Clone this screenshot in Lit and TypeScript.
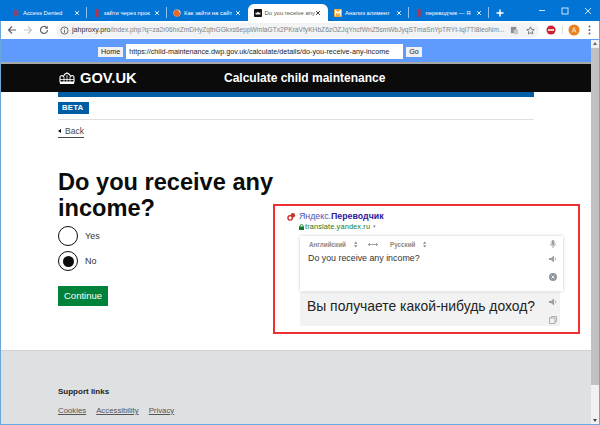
import { LitElement, html, css, svg } from "lit";
import { customElement } from "lit/decorators.js";

const X = svg`<svg class="x" viewBox="0 0 8 8"><path d="M1.500 1.500l5 5M6.500 1.500l-5 5" stroke="currentColor" stroke-width="1.200" fill="none"/></svg>`;
const favs: Record<string, unknown> = {
  red: svg`<svg class="fav" viewBox="0 0 8 10"><rect x="1" y="1" width="6" height="8" rx="1" fill="#7f4a78"/></svg>`,
  ya: svg`<svg class="fav" viewBox="0 0 8 10"><rect x="2" y="0" width="4" height="10" rx="1" fill="#b8324a"/></svg>`,
  fox: svg`<svg class="fav" viewBox="0 0 10 10"><circle cx="5" cy="5" r="4.500" fill="#f6f0e6"/><path d="M1 6a4 4 0 0 1 5-5l3 4a4 4 0 0 1-8 1z" fill="#e8682c"/></svg>`,
  gov: svg`<svg class="fav" viewBox="0 0 10 10"><rect width="10" height="10" rx="1" fill="#111"/><path d="M2 7V4l1.500 1L5 3l1.500 2L8 4v3z" fill="#eee"/></svg>`,
  m: svg`<svg class="fav" viewBox="0 0 10 10"><rect width="10" height="10" rx="1" fill="#f2a93b"/><path d="M2 8V2l3 3.500L8 2v6" stroke="#fff" stroke-width="1.300" fill="none"/></svg>`,
};

@customElement("app-root")
export class AppRoot extends LitElement {
  static styles = css`
    :host { display: block; width: 600px; height: 425px; overflow: hidden; font-family: "Liberation Sans", Arial, sans-serif; color: #0b0c0c; background: #fff; position: relative; }
    .window { height: 425px; box-sizing: border-box; display: flex; flex-direction: column; border: 1px solid #6ba6dc; border-top: 0; }
    .tabs { height: 21px; flex: none; background: #0274d6; display: flex; align-items: flex-end; margin: 0 -1px; padding-left: 6px; color: #fff; font-size: 5.900px; }
    .tab { width: 80.500px; height: 17px; box-sizing: border-box; display: flex; align-items: center; gap: 3px; padding: 0 4px 0 6px; position: relative; flex: none; }
    .tab.sep::after { content: ""; position: absolute; right: 0; top: 3px; height: 11px; width: 1px; background: #8fc2ee; }
    .tab.on { background: #fff; border-radius: 6px 6px 0 0; }
    .tab .t { flex: 1; white-space: nowrap; min-width: 0; }
    .tab.on .t { color: #555; }
    .tab svg.fav { width: 8px; height: 8px; flex: none; }
    .x { width: 6px; height: 6px; flex: none; margin-right: 3px; }
    .tab.on .x { color: #222; }
    .plus { margin-left: 7px; width: 8px; height: 8px; margin-bottom: 4px; flex: none; }
    .winc { margin-left: auto; display: flex; align-items: center; height: 21px; align-self: flex-start; padding-right: 8px; gap: 15px; }
    .winc svg { width: 8px; height: 8px; display: block; }
    .toolbar { height: 18px; flex: none; background: #fff; display: flex; align-items: center; padding-left: 6px; box-sizing: border-box; }
    .nav { width: 16px; height: 10px; flex: none; display: flex; justify-content: flex-start; }
    .nav svg { width: 10px; height: 10px; }
    .omni { margin-left: 1px; width: 483px; height: 15px; border-radius: 8px; background: #f1f3f4; display: flex; align-items: center; flex: none; padding: 0 4px 0 4px; box-sizing: border-box; gap: 3px; font-size: 6.650px; color: #808488; white-space: nowrap; overflow: hidden; }
    .omni b { font-weight: 400; color: #333; font-size: 7.100px; }
    .omni .u { flex: 1; min-width: 0; }
    .omni svg { width: 9px; height: 9px; flex: none; }
    .omni svg.star { margin-left: 4px; }
    .tools { display: flex; align-items: center; padding-left: 7px; }
    .tools svg { display: block; }
    .proxy { height: 21px; padding: 2px 0 0 97px; flex: none; background: #5f9bfd; border-bottom: 2px solid #a8a8a8; box-sizing: content-box; display: flex; align-items: center; font-size: 7.200px; color: #222; }
    .btn { background: #f0f0f0; height: 10px; padding: 0 3px; line-height: 10px; font-size: 7.200px; }
    .addr { background: #fff; width: 277px; height: 15px; line-height: 15px; margin: 0 3px; padding-left: 3px; box-sizing: border-box; white-space: nowrap; overflow: hidden; }
    .body { flex: 1; display: flex; min-height: 0; }
    .page { flex: 1; min-width: 0; display: flex; flex-direction: column; position: relative; }
    .scroll { width: 8px; flex: none; background: #f1f1f1; margin-top: -24px; display: flex; flex-direction: column; justify-content: space-between; }
    .arrow { height: 7px; flex: none; position: relative; }
    .arrow::after { content: ""; position: absolute; left: 2px; top: 2px; border: 2px solid transparent; border-bottom: 3px solid #666; border-top: 0; }
    .arrow.dn::after { border-bottom: 0; border-top: 3px solid #444; }
    .thumb { height: 337px; flex: none; background: #c1c1c1; margin-bottom: 32px; }
    .bar { background: #0b0b0b; height: 28px; flex: none; color: #fff; display: flex; align-items: center; padding-left: 57px; }
    .crown { width: 20px; height: 14px; flex: none; margin-left: -1px; }
    .gov { font-weight: 700; font-size: 14.700px; margin-left: 3px; width: 144px; }
    .title { font-weight: 700; font-size: 12px; }
    .main { flex: 1; padding: 0 57px; display: flex; flex-direction: column; align-items: flex-start; }
    .rule { align-self: stretch; height: 5px; background: #005ea5; flex: none; }
    .phase { align-self: stretch; border-bottom: 1px solid #dee0e2; padding: 5px 0; }
    .beta { display: block; width: 31px; height: 12px; background: #005ea5; color: #fff; font-size: 7.800px; font-weight: 700; line-height: 12px; padding-left: 4px; box-sizing: border-box; letter-spacing: .2px; }
    .back { margin-top: 6px; font-size: 8.500px; line-height: 11px; color: #454a4c; border-bottom: 1px solid #454a4c; padding-left: 7px; position: relative; height: 11px; }
    .back::before { content: ""; position: absolute; left: 0; top: 3px; border: 2.500px solid transparent; border-right: 3px solid #0b0c0c; border-left: 0; }
    h1 { margin: 31px 0 0; font-size: 23.600px; line-height: 26px; font-weight: 700; width: 230px; }
    .radio { display: flex; align-items: center; gap: 7px; font-size: 9px; color: #333; height: 20px; margin-top: 5px; }
    .radio.first { margin-top: 5px; }
    .ring { width: 20px; height: 20px; border: 1.500px solid #0b0c0c; border-radius: 50%; box-sizing: border-box; display: flex; align-items: center; justify-content: center; background: #fff; }
    .ring i { width: 11px; height: 11px; border-radius: 50%; background: #0b0c0c; display: block; }
    .cont { margin-top: 15px; width: 50px; height: 20px; background: #00823b; color: #fff; font-size: 9.500px; line-height: 20px; text-align: center; }
    .foot { height: 74px; flex: none; background: #dee0e2; border-top: 1px solid #cfd1d3; padding: 36px 57px 0; box-sizing: border-box; }
    .foot h2 { margin: 0; font-size: 8px; line-height: 10px; font-weight: 700; color: #222; }
    .links { display: flex; gap: 10px; margin-top: 9px; font-size: 7.800px; line-height: 10px; color: #555; text-decoration: underline; }
    .callout { position: absolute; left: 272px; top: 140px; width: 307px; height: 130px; box-sizing: border-box; border: 2px solid #ee3030; background: #fff; padding: 5px 0 0 12px; }
    .yh { display: flex; align-items: center; gap: 3px; height: 10px; font-size: 8.800px; color: #5050b0; }
    .yh b { color: #2a1aa0; }
    .yh svg { width: 9px; height: 9px; margin-top: 1px; flex: none; }
    .site { margin: 1px 0 0 12px; font-size: 7.400px; line-height: 9px; color: #127a2a; display: flex; align-items: center; gap: 1px; height: 9px; letter-spacing: .12px; }
    .site svg { width: 5px; height: 6px; }
    .site em { font-style: normal; color: #888; font-size: 5px; margin-left: 2px; }
    .card { width: 263px; margin: 5px 0 0 13px; background: #fff; box-shadow: 0 0 3px rgba(0,0,0,.22); height: 55px; box-sizing: border-box; padding: 4px 4px 0 9px; position: relative; z-index: 1; }
    .langs { display: flex; align-items: center; font-size: 6.300px; color: #888; font-weight: 700; height: 9px; }
    .l1 { width: 45px; }
    .l2 { width: 14px; height: 7px; flex: none; }
    .sw { width: 22px; }
    .sw svg { width: 10px; height: 5px; display: block; }
    .l3 { width: 33px; }
    .src { font-size: 8.850px; line-height: 12px; color: #333; margin-top: 3px; margin-left: -1px; }
    .ic { position: absolute; right: 6px; width: 8px; height: 8px; }
    .mic { top: 4px; } .spk { top: 19px; } .clr { top: 37px; } .spk2 { top: 6px; right: 3px; } .cpy { top: 24px; right: 3px; }
    .res { width: 260px; margin: 1px 0 0 13px; background: #f2f2f2; height: 34px; position: relative; font-size: 13.900px; line-height: 28px; color: #222; padding-left: 7px; box-sizing: border-box; white-space: nowrap; }
  `;

  private tab(icon: string, text: string, cls = "sep") {
    return html`<div class="tab ${cls}">${favs[icon]}<span class="t">${text}</span>${X}</div>`;
  }

  render() {
    const speaker = svg`<path d="M0 3h2l3-2.500v7L2 5H0z" fill="#9a9fa3"/><path d="M6 2.500a2 2 0 0 1 0 3" stroke="#9a9fa3" fill="none" stroke-width=".8"/>`;
    const updn = svg`<svg class="l2" viewBox="0 0 14 7"><path d="M0 2.700L1.700 .5l1.700 2.200zM0 4.300l1.700 2.200 1.700-2.200z" fill="#888"/></svg>`;
    return html`
      <div class="window">
        <div class="tabs">
          ${this.tab("red", "Access Denied")}
          ${this.tab("ya", "зайти через прок")}
          ${this.tab("fox", "Как зайти на сайт", "")}
          ${this.tab("gov", "Do you receive any", "on")}
          ${this.tab("m", "Анализ алимент")}
          ${this.tab("ya", "переводчик — Я")}
          <svg class="plus" viewBox="0 0 8 8"><path d="M4 .5v7M.5 4h7" stroke="#fff" stroke-width="1.500"/></svg>
          <div class="winc">
            <svg viewBox="0 0 8 8"><path d="M1 3.500h6" stroke="#cfe6fa"/></svg>
            <svg viewBox="0 0 8 8"><rect x="1" y="1" width="6" height="6" fill="none" stroke="#cfe6fa"/></svg>
            <svg viewBox="0 0 8 8"><path d="M1 1l6 6M7 1L1 7" stroke="#cfe6fa"/></svg>
          </div>
        </div>
        <div class="toolbar">
          <div class="nav"><svg viewBox="0 0 10 10"><path d="M9 5H2M5 1.500L1.500 5 5 8.500" stroke="#5f6368" stroke-width="1.200" fill="none"/></svg></div>
          <div class="nav"><svg viewBox="0 0 10 10"><path d="M1 5h7M5 1.500L8.500 5 5 8.500" stroke="#c3c6c9" stroke-width="1.200" fill="none"/></svg></div>
          <div class="nav"><svg viewBox="0 0 10 10"><path d="M8.500 5a3.500 3.500 0 1 1-1-2.500" stroke="#5f6368" stroke-width="1.200" fill="none"/><path d="M8.800 .8v3h-3z" fill="#5f6368"/></svg></div>
          <div class="omni">
            <svg viewBox="0 0 10 10"><circle cx="5" cy="5" r="4" fill="none" stroke="#5f6368"/><path d="M5 4.500v3M5 2.500v1" stroke="#5f6368"/></svg>
            <span class="u"><b>jahproxy.pro</b>/index.php?q=za2r06hxZmDHyZqfnGGkxs6eppWmlaGTx2PKraVfyKHbZ6zOZJqYncfWnZ5smWbJyqSTmaSnYpTRYt-Iql7TI8ieoNm...</span>
            <svg viewBox="0 0 10 10"><rect x="1" y="1" width="6" height="7" fill="#8a8d90"/><rect x="4" y="4" width="5" height="5" fill="#c4c6c8"/></svg>
            <svg class="star" viewBox="0 0 10 10"><path d="M5 1l1.200 2.700 2.900.3-2.200 2 .6 2.900L5 7.400 2.500 8.900l.6-2.900-2.200-2 2.900-.3z" fill="none" stroke="#5f6368" stroke-width=".9"/></svg>
          </div>
          <div class="tools">
            <svg width="10" height="10" viewBox="0 0 10 10"><circle cx="5" cy="5" r="4.500" fill="#cc2030"/><path d="M2 5h6" stroke="#fff" stroke-width="1.500"/></svg>
            <svg width="1" height="10" viewBox="0 0 1 10" style="margin-left:6px"><rect y="1" width="1" height="8" fill="#dcdcdc"/></svg>
            <svg width="12" height="12" viewBox="0 0 12 12" style="margin-left:5px"><circle cx="6" cy="6" r="5.500" fill="#e8821e"/><path d="M4 8.500L6 3.500l2 5M4.800 7h2.400" stroke="#fff" stroke-width=".7" fill="none"/></svg>
            <svg width="3" height="10" viewBox="0 0 3 10" style="margin-left:8px"><circle cx="1.500" cy="1.500" r="1" fill="#5f6368"/><circle cx="1.500" cy="5" r="1" fill="#5f6368"/><circle cx="1.500" cy="8.500" r="1" fill="#5f6368"/></svg>
          </div>
        </div>
        <div class="proxy">
          <span class="btn">Home</span>
          <span class="addr">https://child-maintenance.dwp.gov.uk/calculate/details/do-you-receive-any-income</span>
          <span class="btn">Go</span>
        </div>
        <div class="body">
          <div class="page">
            <div class="bar">
              <svg class="crown" viewBox="0 0 20 14"><path d="M3 11V6.500a2 2 0 0 1 2-2l1.500 1 1-2 2.500-1.500 2.500 1.500 1 2 1.500-1a2 2 0 0 1 2 2V11z" fill="none" stroke="#fff" stroke-width="1.100"/><path d="M3 8.500h14M7 6v5M10 4v7M13 6v5" stroke="#fff" stroke-width=".8"/><rect x="3" y="11" width="14" height="2" fill="#fff"/></svg>
              <span class="gov">GOV.UK</span>
              <span class="title">Calculate child maintenance</span>
            </div>
            <div class="main">
              <div class="rule"></div>
              <div class="phase"><span class="beta">BETA</span></div>
              <div class="back">Back</div>
              <h1>Do you receive any income?</h1>
              <div class="radio first"><span class="ring"></span>Yes</div>
              <div class="radio"><span class="ring"><i></i></span>No</div>
              <div class="cont">Continue</div>
            </div>
            <div class="foot">
              <h2>Support links</h2>
              <div class="links"><span>Cookies</span><span>Accessibility</span><span>Privacy</span></div>
            </div>
            <div class="callout">
              <div class="yh">
                <svg viewBox="0 0 10 10"><circle cx="3.500" cy="6.500" r="2.500" fill="none" stroke="#d02a20" stroke-width="1.500"/><circle cx="6.500" cy="3.500" r="2.500" fill="#c83428"/></svg>
                <span>Яндекс.<b>Переводчик</b></span>
              </div>
              <div class="site"><svg viewBox="0 0 5 6"><rect y="2.500" width="5" height="3.500" fill="#127a2a"/><path d="M1 3V2a1.500 1.500 0 0 1 3 0v1" fill="none" stroke="#127a2a" stroke-width=".8"/></svg>translate.yandex.ru<em>▾</em></div>
              <div class="card">
                <div class="langs"><span class="l1">Английский</span>${updn}<span class="sw"><svg viewBox="0 0 10 5"><path d="M0 2.500h10M2 1L.5 2.500 2 4M8 1l1.500 1.500L8 4" stroke="#777" stroke-width=".7" fill="none"/></svg></span><span class="l3">Русский</span>${updn}</div>
                <div class="src">Do you receive any income?</div>
                <svg class="ic mic" viewBox="0 0 8 8"><rect x="2.500" y="0" width="3" height="5" rx="1.500" fill="#9a9fa3"/><path d="M1.500 3.500a2.500 2.500 0 0 0 5 0M4 6v2" stroke="#9a9fa3" fill="none" stroke-width=".8"/></svg>
                <svg class="ic spk" viewBox="0 0 8 8">${speaker}</svg>
                <svg class="ic clr" viewBox="0 0 8 8"><circle cx="4" cy="4" r="4" fill="#8f969b"/><path d="M2.500 2.500l3 3M5.500 2.500l-3 3" stroke="#fff" stroke-width=".8"/></svg>
              </div>
              <div class="res">Вы получаете какой-нибудь доход?
                <svg class="ic spk2" viewBox="0 0 8 8">${speaker}</svg>
                <svg class="ic cpy" viewBox="0 0 8 8"><rect x=".5" y="2" width="5.500" height="5.500" fill="none" stroke="#9a9fa3" stroke-width=".8"/><path d="M2.500 2V.5H7.500V5.500H6" fill="none" stroke="#9a9fa3" stroke-width=".8"/></svg>
              </div>
            </div>
          </div>
          <div class="scroll"><div class="arrow"></div><div class="thumb"></div><div class="arrow dn"></div></div>
        </div>
      </div>
    `;
  }
}
